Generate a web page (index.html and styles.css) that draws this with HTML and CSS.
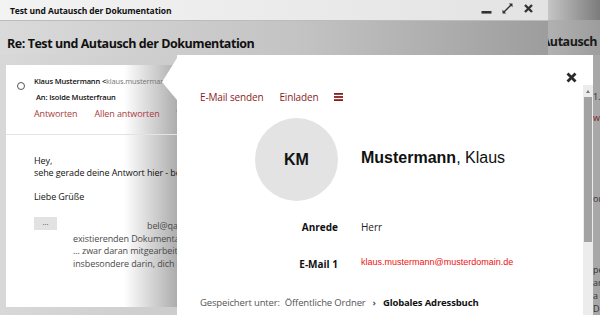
FILE: index.html
```html
<!DOCTYPE html>
<html lang="de">
<head>
  <meta charset="UTF-8">
  <title>Re: Test und Autausch der Dokumentation</title>
  <link rel="stylesheet" href="styles.css">
</head>
<body>
  <div class="desk">
    <!-- window behind, only a strip of it shows -->
    <div class="win win-back">
      <div class="back-title"></div>
      <div class="back-subject">Re: Test und Autausch der Dokumentation</div>
      <div class="back-body">
        <span class="frag frag-1">1.</span>
        <span class="frag frag-red">wo</span>
        <span class="frag frag-2">or</span>
        <span class="frag frag-3">pe</span>
        <span class="frag">ar</span>
        <span class="frag">a</span>
        <span class="frag">Do</span>
      </div>
    </div>

    <div class="win win-front">
      <div class="titlebar">
        <span class="title">Test und Autausch der Dokumentation</span>
        <div class="controls">
          <svg width="11" height="11" viewBox="0 0 11 11"><rect x="0.5" y="8" width="10" height="2.6" fill="#333"/></svg>
          <svg width="11" height="11" viewBox="0 0 11 11"><path d="M2 9 L9 2" stroke="#333" stroke-width="1.4"/><path d="M0.5 10.5 L0.5 6.8 L4.2 10.5 Z M10.5 0.5 L10.5 4.2 L6.8 0.5 Z" fill="#333"/></svg>
          <svg width="11" height="11" viewBox="0 0 11 11"><path d="M2 2 L9 9 M9 2 L2 9" stroke="#333" stroke-width="2.4"/></svg>
        </div>
      </div>
      <div class="subject">Re: Test und Autausch der Dokumentation</div>
      <div class="pane">
        <div class="card">
          <div class="msg-top">
            <div class="msg-head">
              <span class="radio"></span>
              <div class="people">
                <div class="from"><b>Klaus Mustermann &lt;</b>klaus.mustermann<span class="q">q</span></div>
                <div class="to"><b>An: Isolde Musterfraun</b></div>
              </div>
            </div>
            <div class="actions">
              <a>Antworten</a>
              <a>Allen antworten</a>
              <a>Weiterleiten</a>
            </div>
          </div>
          <div class="msg-body">
            <p>Hey,<br>sehe gerade deine Antwort hier - bei</p>
            <p>Liebe Grüße</p>
            <div class="quote-row">
              <span class="more">...</span>
              <div class="quote">
                <div class="quote-first">bel@qa.de</div>
                <div>existierenden Dokumentation</div>
                <div>... zwar daran mitgearbeitet</div>
                <div>insbesondere darin, dich bei</div>
              </div>
            </div>
          </div>
        </div>
      </div>
    </div>

    <!-- contact card popup -->
    <div class="popup">
      <span class="pointer"></span>
      <svg class="close" width="11" height="11" viewBox="0 0 11 11"><path d="M1.5 1.5 L9.5 9.5 M9.5 1.5 L1.5 9.5" stroke="#2a2a2a" stroke-width="2.8"/></svg>
      <div class="scrollbar"><span class="arrow"></span><span class="thumb"></span></div>

      <nav class="contact-nav">
        <a>E-Mail senden</a>
        <a>Einladen</a>
        <svg width="9" height="8" viewBox="0 0 9 8"><rect y="0" width="9" height="1.8" fill="#8b1c1c"/><rect y="3.1" width="9" height="1.8" fill="#8b1c1c"/><rect y="6.2" width="9" height="1.8" fill="#8b1c1c"/></svg>
      </nav>

      <div class="contact-head">
        <div class="avatar">KM</div>
        <div class="name"><b>Mustermann</b>, Klaus</div>
      </div>

      <div class="fields">
        <div class="label">Anrede</div>
        <div class="value">Herr</div>
        <div class="label">E-Mail 1</div>
        <div class="value email">klaus.mustermann@musterdomain.de</div>
      </div>

      <div class="saved">
        <span>Gespeichert unter:</span>
        <span>Öffentliche Ordner</span>
        <span class="chev">›</span>
        <b>Globales Adressbuch</b>
      </div>
    </div>
  </div>
</body>
</html>
```

FILE: styles.css
```css
body {
  margin: 0;
  font-family: "Open Sans", "Noto Sans", sans-serif;
  color: #111;
}

.desk {
  position: relative;
  width: 600px;
  height: 315px;
  overflow: hidden;
  background: linear-gradient(to right, #b8b8b8, #8c8c8c);
}

.win {
  position: absolute;
  top: 0;
  height: 315px;
  display: flex;
  flex-direction: column;
}

/* back window */
.win-back {
  left: 461px;
  width: 200px;
  background: linear-gradient(to right, #c4c4c4, #9a9a9a);
}

.back-title {
  height: 20px;
  background: linear-gradient(to right, #cfcfcf 40%, #5e5e5e 80%);
}

.back-subject {
  height: 35px;
  box-sizing: border-box;
  padding: 13px 0 0 7px;
  font-size: 12.5px;
  font-weight: 700;
  letter-spacing: -0.45px;
  white-space: nowrap;
  background: linear-gradient(to right, #b0b0b0 45%, #858585);
  color: #1a1a1a;
}

.back-body {
  display: flex;
  flex-direction: column;
  padding: 35px 0 0 132px;
  font-size: 9px;
  line-height: 13px;
  color: #333;
}

.frag-red { color: #7a2020; margin-top: 8px; }
.frag-2 { margin-top: 68px; }
.frag-3 { margin-top: 58px; }

/* front window */
.win-front {
  left: 0;
  width: 548px;
  background: #d6d6d6;
}

.titlebar {
  height: 20px;
  border-bottom: 1px solid #bcbcbc;
  background: linear-gradient(to right, #f3f3f3, #e3e3e3);
  display: flex;
  align-items: center;
  justify-content: space-between;
  padding: 0 14px 0 10px;
}

.title {
  font-size: 8.5px;
  font-weight: 700;
  letter-spacing: -0.1px;
}

.controls {
  display: flex;
  gap: 10px;
  margin-top: -3px;
}

.subject {
  height: 34px;
  box-sizing: border-box;
  padding: 13px 0 0 7px;
  font-size: 12.5px;
  line-height: 20px;
  font-weight: 700;
  letter-spacing: -0.45px;
  white-space: nowrap;
  background: linear-gradient(to right, #dadada, #c3c3c3 55%, #9d9d9d);
}

.pane {
  flex: 1;
  padding: 10px 0 8px 6px;
  background: linear-gradient(to right, #d8d8d8, #c4c4c4 55%, #9d9d9d);
  display: flex;
}

.card {
  flex: 1;
  background: linear-gradient(to right, #fff 0, #fff 118px, #ababab 172px);
  display: flex;
  flex-direction: column;
}

.msg-top {
  border-bottom: 1px solid #e3e3e3;
  height: 70px;
  box-sizing: border-box;
  padding: 10px 0 0 11px;
}

.msg-head {
  display: flex;
  gap: 9px;
}

.radio {
  width: 6px;
  height: 6px;
  margin-top: 7px;
  border: 1.3px solid #555;
  border-radius: 50%;
  flex: none;
}

.people {
  font-size: 7.5px;
  line-height: 12px;
  letter-spacing: -0.15px;
  white-space: nowrap;
}

.from { color: #777; }
.from b { color: #111; font-weight: 600; }
.q { color: #333; }

.to {
  margin-top: 4px;
  padding-left: 2px;
}

.to b { font-weight: 600; }

.actions {
  display: flex;
  gap: 17px;
  margin-top: 5px;
  padding-left: 17px;
  font-size: 9px;
  line-height: 12px;
  letter-spacing: -0.1px;
  color: #a83a3a;
  white-space: nowrap;
}

.msg-body {
  padding: 20px 0 0 28px;
  font-size: 9px;
  line-height: 12px;
  letter-spacing: -0.1px;
  white-space: nowrap;
}

.msg-body p {
  margin: 0 0 12px;
}

.quote-row {
  display: flex;
  gap: 16px;
  margin-top: 14px;
}

.more {
  width: 23px;
  height: 13px;
  background: #e2e2e2;
  font-size: 8px;
  line-height: 10px;
  text-align: center;
  color: #555;
  flex: none;
}

.quote {
  padding-top: 3px;
  line-height: 12.5px;
  color: #4a4a4a;
}

.quote-first {
  padding-left: 74px;
}

/* contact popup */
.popup {
  position: absolute;
  left: 177px;
  top: 55px;
  width: 416px;
  height: 280px;
  background: #fff;
  box-sizing: border-box;
  padding: 35px 0 0 23px;
}

.pointer {
  position: absolute;
  left: -15px;
  top: 3px;
  width: 15px;
  height: 42px;
  background: #fff;
  clip-path: polygon(100% 0, 0 57%, 100% 100%);
}

.close {
  position: absolute;
  left: 389px;
  top: 17px;
}

.scrollbar {
  position: absolute;
  left: 406px;
  top: 30px;
  bottom: 0;
  width: 10px;
  background: #ececec;
}

.arrow {
  position: absolute;
  left: 3px;
  top: 5px;
  border-left: 2.5px solid transparent;
  border-right: 2.5px solid transparent;
  border-bottom: 3px solid #777;
}

.thumb {
  position: absolute;
  left: 1px;
  right: 1px;
  top: 12px;
  height: 145px;
  background: #a2a2a2;
}

.contact-nav {
  display: flex;
  align-items: center;
  gap: 16px;
  font-size: 10px;
  line-height: 14px;
  color: #8b1c1c;
  letter-spacing: -0.15px;
}

.contact-head {
  display: flex;
  align-items: center;
  gap: 23px;
  margin: 14px 0 0 55px;
  font-family: "Liberation Sans", Arial, sans-serif;
}

.avatar {
  width: 83px;
  height: 83px;
  border-radius: 50%;
  background: #e3e3e3;
  display: flex;
  align-items: center;
  justify-content: center;
  font-size: 16px;
  font-weight: 700;
}

.name {
  font-size: 16px;
  margin-top: -3px;
}

.fields {
  display: grid;
  grid-template-columns: 138px auto;
  column-gap: 23px;
  row-gap: 23px;
  margin-top: 19px;
  font-size: 10px;
  line-height: 14px;
}

.label {
  text-align: right;
  font-weight: 700;
}

.value {
  color: #222;
}

.email {
  font-family: "Liberation Sans", Arial, sans-serif;
  font-size: 9px;
  color: #ee1111;
  margin-top: -2px;
}

.saved {
  display: flex;
  gap: 5px;
  margin-top: 25px;
  font-size: 9.5px;
  line-height: 14px;
  color: #555;
  letter-spacing: -0.15px;
}

.saved .chev {
  margin: 0 2px;
  font-weight: 700;
}

.saved b {
  color: #111;
}
```
